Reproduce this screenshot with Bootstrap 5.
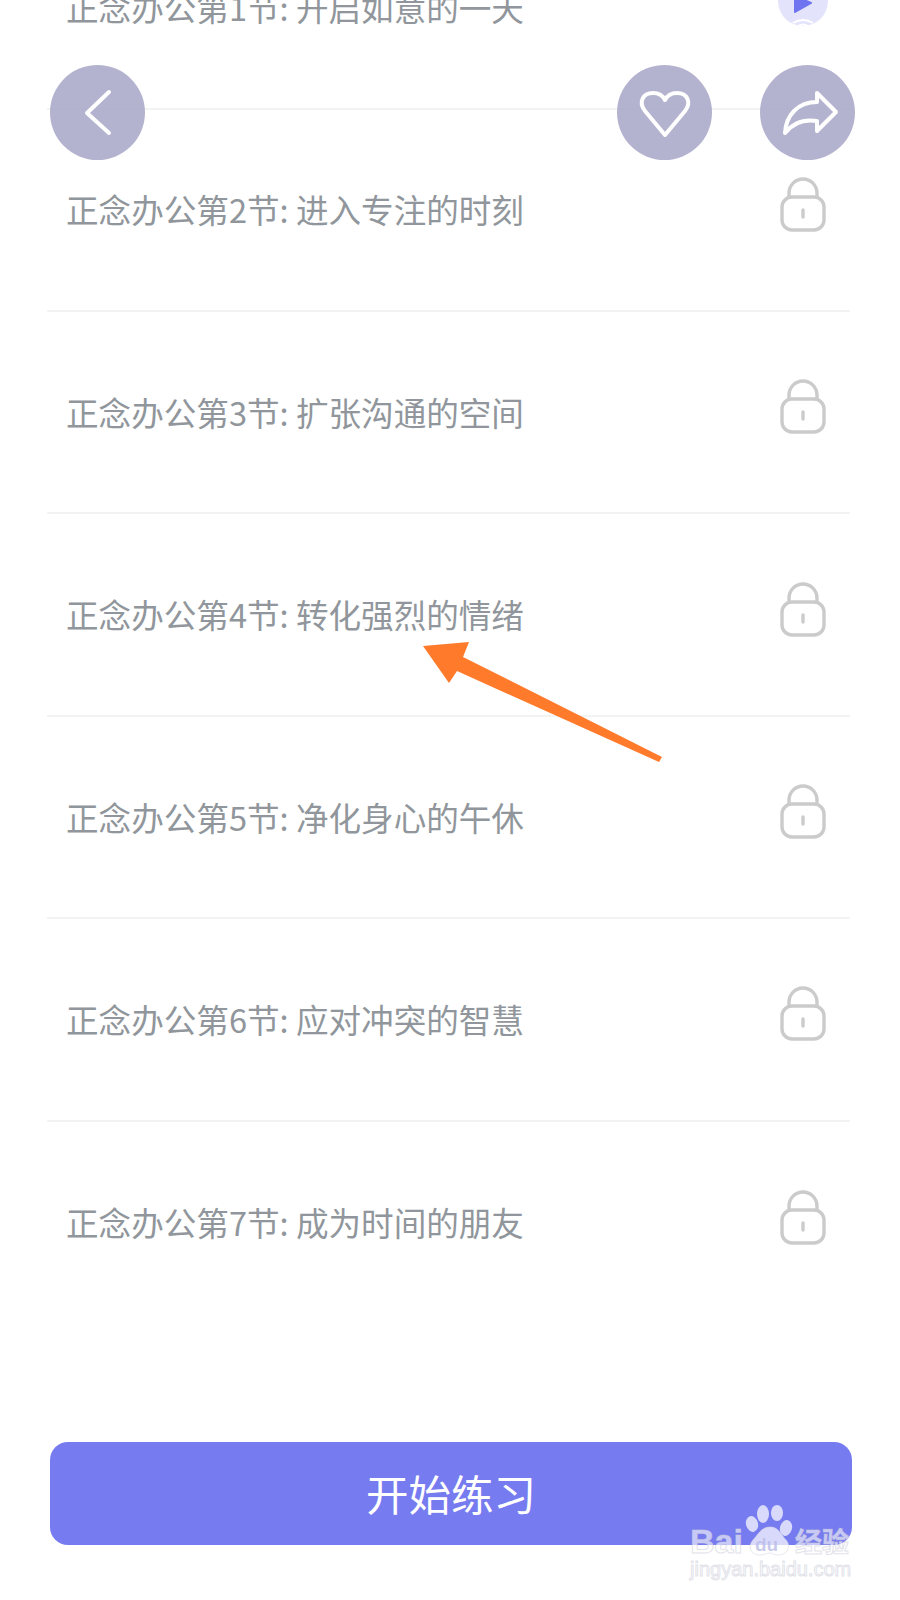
<!DOCTYPE html>
<html lang="zh-CN">
<head>
<meta charset="utf-8">
<title>正念办公</title>
<link href="https://cdn.jsdelivr.net/npm/bootstrap@5.3.0/dist/css/bootstrap.min.css" rel="stylesheet">
<style>
html, body { background: #fff; }
.phone { width: 900px; height: 1600px; overflow: hidden; font-family: "Noto Sans CJK SC", sans-serif; }
.lesson-list { margin: -92.8px 50px 0 47px; --bs-list-group-bg: transparent; }
.lesson-list .lesson-row { height: 202.4px; padding: 0 24px 0 19px; border: 0; border-bottom: 2px solid #f2f4f4; box-sizing: border-box; }
.lesson-name { font-size: 32.6px; font-weight: 400; color: #90969b; line-height: 1; margin-top: 0; }
.lock-ico { width: 46px; height: 55px; margin-bottom: 11px; display: block; }
.play-ico { width: 50px; height: 50px; margin: 0 -2px 13px 0; display: block; }
.round-btn { position: absolute; top: 65px; width: 95px; height: 95px; padding: 0; border: 0; border-radius: 50%; background: rgba(166,166,199,.85); }
.round-btn svg { display: block; width: 95px; height: 95px; fill: none; stroke: #fff; stroke-width: 4; stroke-linecap: round; stroke-linejoin: round; }
.btn-back { left: 50px; }
.btn-fav { left: 617px; }
.btn-share { left: 760px; }
.start-btn { display: block; width: 802px; height: 103px; margin: 118.2px 0 0 50px; padding: 0; border: 0; border-radius: 18px; background: #767bf0; color: #fff; font-size: 42.5px; font-weight: 400; line-height: 1; }
.start-btn:hover { background: #767bf0; color: #fff; }
.mark-arrow { position: absolute; left: 420px; top: 640px; width: 245px; height: 125px; }
.mark-wm { position: absolute; left: 680px; top: 1500px; width: 180px; height: 90px; }
</style>
</head>
<body class="m-0">
<div class="phone position-relative">
  <ul class="lesson-list list-group list-group-flush">
    <li class="lesson-row list-group-item d-flex justify-content-between align-items-center">
      <span class="lesson-name">正念办公第1节: 开启如意的一天</span>
      <svg class="play-ico" viewBox="0 0 50 50"><circle cx="25" cy="25" r="25" fill="#e3e3fb"/><path d="M17 20 L33 27 L17 36 Z" fill="#6f74f0" stroke="#6f74f0" stroke-width="2" stroke-linejoin="round"/><path d="M15 47 Q25 41 35 47 M20 50 Q25 47 30 50" fill="none" stroke="#fff" stroke-width="2"/></svg>
    </li>
    <li class="lesson-row list-group-item d-flex justify-content-between align-items-center">
      <span class="lesson-name">正念办公第2节: 进入专注的时刻</span>
      <svg class="lock-ico" viewBox="0 0 46 55" fill="none" stroke="#cbcbcb" stroke-width="3.4" stroke-linecap="round"><rect x="2" y="20" width="42" height="33" rx="10"/><path d="M9 20 V16 a14 14 0 0 1 28 0 V20"/><path d="M23 33 V40"/></svg>
    </li>
    <li class="lesson-row list-group-item d-flex justify-content-between align-items-center">
      <span class="lesson-name">正念办公第3节: 扩张沟通的空间</span>
      <svg class="lock-ico" viewBox="0 0 46 55" fill="none" stroke="#cbcbcb" stroke-width="3.4" stroke-linecap="round"><rect x="2" y="20" width="42" height="33" rx="10"/><path d="M9 20 V16 a14 14 0 0 1 28 0 V20"/><path d="M23 33 V40"/></svg>
    </li>
    <li class="lesson-row list-group-item d-flex justify-content-between align-items-center">
      <span class="lesson-name">正念办公第4节: 转化强烈的情绪</span>
      <svg class="lock-ico" viewBox="0 0 46 55" fill="none" stroke="#cbcbcb" stroke-width="3.4" stroke-linecap="round"><rect x="2" y="20" width="42" height="33" rx="10"/><path d="M9 20 V16 a14 14 0 0 1 28 0 V20"/><path d="M23 33 V40"/></svg>
    </li>
    <li class="lesson-row list-group-item d-flex justify-content-between align-items-center">
      <span class="lesson-name">正念办公第5节: 净化身心的午休</span>
      <svg class="lock-ico" viewBox="0 0 46 55" fill="none" stroke="#cbcbcb" stroke-width="3.4" stroke-linecap="round"><rect x="2" y="20" width="42" height="33" rx="10"/><path d="M9 20 V16 a14 14 0 0 1 28 0 V20"/><path d="M23 33 V40"/></svg>
    </li>
    <li class="lesson-row list-group-item d-flex justify-content-between align-items-center">
      <span class="lesson-name">正念办公第6节: 应对冲突的智慧</span>
      <svg class="lock-ico" viewBox="0 0 46 55" fill="none" stroke="#cbcbcb" stroke-width="3.4" stroke-linecap="round"><rect x="2" y="20" width="42" height="33" rx="10"/><path d="M9 20 V16 a14 14 0 0 1 28 0 V20"/><path d="M23 33 V40"/></svg>
    </li>
    <li class="lesson-row list-group-item d-flex justify-content-between align-items-center">
      <span class="lesson-name">正念办公第7节: 成为时间的朋友</span>
      <svg class="lock-ico" viewBox="0 0 46 55" fill="none" stroke="#cbcbcb" stroke-width="3.4" stroke-linecap="round"><rect x="2" y="20" width="42" height="33" rx="10"/><path d="M9 20 V16 a14 14 0 0 1 28 0 V20"/><path d="M23 33 V40"/></svg>
    </li>
  </ul>
  <button type="button" class="start-btn btn">开始练习</button>

  <button type="button" class="round-btn btn-back" aria-label="返回"><svg viewBox="0 0 95 95"><path d="M59 27 L37 48 L59 68"/></svg></button>
  <button type="button" class="round-btn btn-fav" aria-label="收藏"><svg viewBox="0 0 95 95"><path d="M48 70 L28 46 C21 37 26 28 36 28 C42 28 46 31 48 35 C50 31 54 28 60 28 C70 28 75 37 68 46 Z"/></svg></button>
  <button type="button" class="round-btn btn-share" aria-label="分享"><svg viewBox="0 0 95 95"><path d="M57 28 L76 47 L57 66 V56 C44 54 33 58 25 68 C26 50 38 37 57 37 Z"/></svg></button>

  <svg class="mark-arrow" viewBox="420 640 245 125"><polygon points="423,646 469,642 463,657 662,757 659,762 457,671 449,683" fill="#ff7a2b"/></svg>

  <svg class="mark-wm" viewBox="680 1500 180 90">
    <g fill="#fff" fill-opacity=".72">
      <ellipse cx="763" cy="1514" rx="6" ry="9"/>
      <ellipse cx="777" cy="1513" rx="6" ry="8"/>
      <ellipse cx="752" cy="1524" rx="6" ry="8" transform="rotate(-15 752 1524)"/>
      <ellipse cx="786" cy="1528" rx="6" ry="8" transform="rotate(15 786 1528)"/>
      <path d="M770 1527 C779 1527 781 1535 786 1540 C792 1547 787 1555 778 1555 C774 1555 772 1553 770 1553 C767 1553 764 1555 760 1555 C751 1555 747 1547 753 1540 C758 1535 761 1527 770 1527 Z" stroke="#d8d8e4" stroke-opacity=".6" stroke-width="1"/>
    </g>
    <g font-family="'Liberation Sans', sans-serif" fill="#fff" fill-opacity=".62" stroke="#c9c9d6" stroke-opacity=".55" stroke-width="1">
      <text x="690" y="1553" font-size="34" font-weight="700">Bai</text>
      <text x="755" y="1551" font-size="19" font-weight="700" fill="#b9bbe8" fill-opacity=".8" stroke="none">du</text>
      <text x="795" y="1552" font-size="27" font-weight="700" font-family="'Noto Sans CJK SC', sans-serif">经验</text>
      <text x="690" y="1576" font-size="20" fill-opacity=".55">jingyan.baidu.com</text>
    </g>
  </svg>
</div>
<script src="https://cdn.jsdelivr.net/npm/bootstrap@5.3.0/dist/js/bootstrap.bundle.min.js"></script>
</body>
</html>
